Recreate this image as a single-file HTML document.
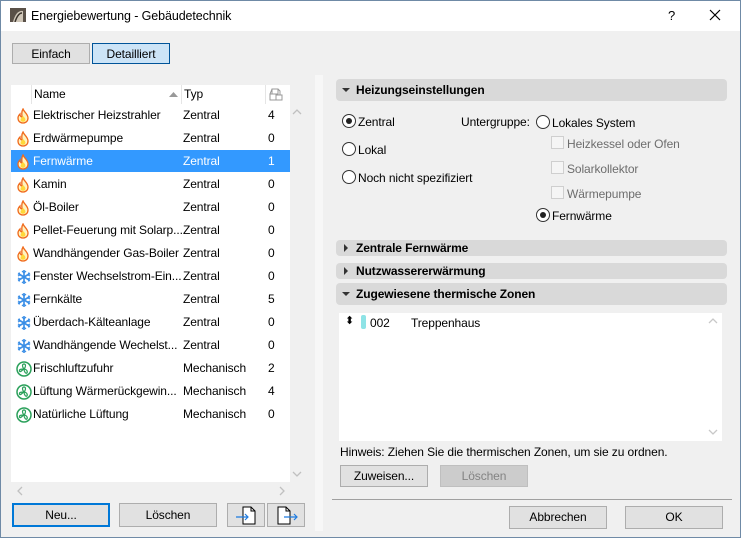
<!DOCTYPE html>
<html><head><meta charset="utf-8"><style>
*{box-sizing:border-box;margin:0;padding:0}
body{width:741px;height:538px;overflow:hidden;background:#f0f0f0;font-family:"Liberation Sans",sans-serif;font-size:12px;color:#000;position:relative;letter-spacing:-0.1px}
.a{position:absolute}
.win{left:0;top:0;width:741px;height:538px;border:1px solid #6f8aa6}
.title{left:1px;top:1px;width:739px;height:30px;background:#fff}
.btn{position:absolute;background:#e1e1e1;border:1px solid #adadad;text-align:center;line-height:20px;font-size:12px}
.row{position:absolute;left:11px;width:279px;height:23px;line-height:23px}
.row span{position:absolute;white-space:nowrap}
.row svg{position:absolute;left:5px;top:4px}
.hdr{position:absolute;left:336px;width:391px;background:#d9d9d9;border-radius:4px;font-weight:bold;font-size:12px;padding-left:20px}
.tri{position:absolute;left:6px;width:0;height:0}
.radio{position:absolute;width:14px;height:14px;border:1px solid #333;border-radius:50%;background:#fff}
.radio.on::after{content:"";position:absolute;left:3px;top:3px;width:6px;height:6px;border-radius:50%;background:#222}
.cb{position:absolute;width:13px;height:13px;border:1px solid #cfcfcf;background:#f5f5f5}
.lbl{position:absolute;white-space:nowrap}
.gray{color:#6d6d6d}
</style></head><body>
<div class="a win"></div>
<div class="a title"></div>
<svg class="a" style="left:10px;top:8px" width="16" height="14"><rect width="16" height="14" fill="#5a5148"/><path d="M3 14 Q6 2 13 3 L13 14" fill="#cfc6b8"/><path d="M5 14 Q8 5 12 5" stroke="#3a332c" fill="none" stroke-width="1.5"/></svg>
<div class="lbl" style="left:31px;top:9px;font-size:12.5px">Energiebewertung - Gebäudetechnik</div>
<div class="lbl" style="left:668px;top:8px;font-size:13px">?</div>
<svg class="a" style="left:709px;top:9px" width="12" height="12"><path d="M1 1L11 11M11 1L1 11" stroke="#000" stroke-width="1.2"/></svg>

<div class="btn" style="left:12px;top:43px;width:78px;height:21px">Einfach</div>
<div class="btn" style="left:92px;top:43px;width:78px;height:21px;background:#cce4f7;border-color:#005499">Detailliert</div>

<div class="a" style="left:315px;top:75px;width:8px;height:456px;background:#f7f7f7"></div>

<!-- list -->
<div class="a" style="left:11px;top:85px;width:279px;height:397px;background:#fff"></div>
<div class="a" style="left:31px;top:85px;width:150px;height:19px;border-left:1px solid #e5e5e5;line-height:19px;padding-left:2px">Name</div>
<svg class="a" style="left:169px;top:92px" width="9" height="6"><path d="M0 5L4.5 0L9 5Z" fill="#999"/></svg>
<div class="a" style="left:181px;top:85px;width:84px;height:19px;border-left:1px solid #e5e5e5;line-height:19px;padding-left:2px">Typ</div>
<div class="a" style="left:265px;top:85px;width:20px;height:19px;border-left:1px solid #e5e5e5"></div>
<svg class="a" style="left:268px;top:86px" width="16" height="16"><path d="M2 8h6v6H2zM8 9h6v5H8zM4 3h6v5H4zM2 8l2-5M10 3l2 2v4" fill="none" stroke="#999"/></svg>
<div class="a" style="left:11px;top:150px;width:279px;height:22px;background:#3399ff"></div>

<svg width="0" height="0" style="position:absolute"><defs>
<g id="fl"><path d="M7 1C8 4 12 6 12 10C12 13 10 15 7 15C4 15 2 13 2 10C2 8 3 7 4 6C4 8 5 9 6 9C6 6 5 4 7 1Z" fill="#fff3c0" stroke="#f06a1c" stroke-width="1.3"/><path d="M7 8C9 10 10 11 9 13C8 14 6 14 5 13C4 12 5 10 7 8Z" fill="#ffd83a"/></g>
<g id="sn" stroke="#3a8ee6" stroke-width="1.6" fill="none"><path d="M8 1V15M2 4.5L14 11.5M14 4.5L2 11.5"/><path d="M6 2L8 4L10 2M6 14L8 12L10 14M2 7L4 6L3 3.5M14 9L12 10L13 12.5M14 7L12 6L13 3.5M2 9L4 10L3 12.5" stroke-width="1.2"/></g>
<g id="fn"><circle cx="8" cy="8" r="7" fill="#fff" stroke="#2aa05a" stroke-width="1.5"/><path d="M8 8C6 6 6 3 8 3C10 3 10 6 8 8ZM8 8C10 8 12 10 11 12C10 13 8 11 8 8ZM8 8C6 9 4 12 3.5 10C3 8 6 8 8 8Z" fill="none" stroke="#2aa05a" stroke-width="1.2"/></g>
</defs></svg>

<div class="row" style="top:104px"><svg width="16" height="16"><use href="#fl"/></svg><span style="left:22px">Elektrischer Heizstrahler</span><span style="left:172px">Zentral</span><span style="left:257px">4</span></div>
<div class="row" style="top:127px"><svg width="16" height="16"><use href="#fl"/></svg><span style="left:22px">Erdwärmepumpe</span><span style="left:172px">Zentral</span><span style="left:257px">0</span></div>
<div class="row" style="top:150px;color:#fff"><svg width="16" height="16"><use href="#fl"/></svg><span style="left:22px">Fernwärme</span><span style="left:172px">Zentral</span><span style="left:257px">1</span></div>
<div class="row" style="top:173px"><svg width="16" height="16"><use href="#fl"/></svg><span style="left:22px">Kamin</span><span style="left:172px">Zentral</span><span style="left:257px">0</span></div>
<div class="row" style="top:196px"><svg width="16" height="16"><use href="#fl"/></svg><span style="left:22px">Öl-Boiler</span><span style="left:172px">Zentral</span><span style="left:257px">0</span></div>
<div class="row" style="top:219px"><svg width="16" height="16"><use href="#fl"/></svg><span style="left:22px">Pellet-Feuerung mit Solarp...</span><span style="left:172px">Zentral</span><span style="left:257px">0</span></div>
<div class="row" style="top:242px"><svg width="16" height="16"><use href="#fl"/></svg><span style="left:22px">Wandhängender Gas-Boiler</span><span style="left:172px">Zentral</span><span style="left:257px">0</span></div>
<div class="row" style="top:265px"><svg width="16" height="16"><use href="#sn"/></svg><span style="left:22px">Fenster Wechselstrom-Ein...</span><span style="left:172px">Zentral</span><span style="left:257px">0</span></div>
<div class="row" style="top:288px"><svg width="16" height="16"><use href="#sn"/></svg><span style="left:22px">Fernkälte</span><span style="left:172px">Zentral</span><span style="left:257px">5</span></div>
<div class="row" style="top:311px"><svg width="16" height="16"><use href="#sn"/></svg><span style="left:22px">Überdach-Kälteanlage</span><span style="left:172px">Zentral</span><span style="left:257px">0</span></div>
<div class="row" style="top:334px"><svg width="16" height="16"><use href="#sn"/></svg><span style="left:22px">Wandhängende Wechelst...</span><span style="left:172px">Zentral</span><span style="left:257px">0</span></div>
<div class="row" style="top:357px"><svg width="16" height="16"><use href="#fn"/></svg><span style="left:22px">Frischluftzufuhr</span><span style="left:172px">Mechanisch</span><span style="left:257px">2</span></div>
<div class="row" style="top:380px"><svg width="16" height="16"><use href="#fn"/></svg><span style="left:22px">Lüftung Wärmerückgewin...</span><span style="left:172px">Mechanisch</span><span style="left:257px">4</span></div>
<div class="row" style="top:403px"><svg width="16" height="16"><use href="#fn"/></svg><span style="left:22px">Natürliche Lüftung</span><span style="left:172px">Mechanisch</span><span style="left:257px">0</span></div>

<svg class="a" style="left:292px;top:108px" width="10" height="8"><path d="M1 6L5 2L9 6" stroke="#c0c0c0" fill="none" stroke-width="1.3"/></svg>
<svg class="a" style="left:292px;top:470px" width="10" height="8"><path d="M1 2L5 6L9 2" stroke="#c0c0c0" fill="none" stroke-width="1.3"/></svg>
<svg class="a" style="left:16px;top:486px" width="8" height="10"><path d="M6 1L2 5L6 9" stroke="#c0c0c0" fill="none" stroke-width="1.3"/></svg>
<svg class="a" style="left:278px;top:486px" width="8" height="10"><path d="M2 1L6 5L2 9" stroke="#c0c0c0" fill="none" stroke-width="1.3"/></svg>

<div class="btn" style="left:12px;top:503px;width:98px;height:24px;border:2px solid #0078d7;line-height:20px">Neu...</div>
<div class="btn" style="left:119px;top:503px;width:98px;height:24px;line-height:22px">Löschen</div>
<div class="btn" style="left:227px;top:503px;width:38px;height:24px"></div>
<div class="btn" style="left:267px;top:503px;width:38px;height:24px"></div>
<svg class="a" style="left:235px;top:506px" width="24" height="19"><path d="M8 1H16L20 5V18H8Z" fill="#fff" stroke="#000"/><path d="M16 1V5H20" fill="none" stroke="#000"/><path d="M1 11H13M10 8L13 11L10 14" stroke="#1e7be0" fill="none" stroke-width="1.2"/></svg>
<svg class="a" style="left:275px;top:506px" width="24" height="19"><path d="M3 1H11L15 5V18H3Z" fill="#fff" stroke="#000"/><path d="M11 1V5H15" fill="none" stroke="#000"/><path d="M9 11H22M19 8L22 11L19 14" stroke="#1e7be0" fill="none" stroke-width="1.2"/></svg>

<!-- right -->
<div class="hdr" style="top:79px;height:22px;line-height:22px"><div class="tri" style="top:9px;border-left:4px solid transparent;border-right:4px solid transparent;border-top:4px solid #333"></div>Heizungseinstellungen</div>
<div class="radio on" style="left:342px;top:114px"></div><div class="lbl" style="left:358px;top:115px">Zentral</div>
<div class="radio" style="left:342px;top:142px"></div><div class="lbl" style="left:358px;top:143px">Lokal</div>
<div class="radio" style="left:342px;top:170px"></div><div class="lbl" style="left:358px;top:171px">Noch nicht spezifiziert</div>
<div class="lbl" style="left:461px;top:115px">Untergruppe:</div>
<div class="radio" style="left:536px;top:115px"></div><div class="lbl" style="left:552px;top:116px">Lokales System</div>
<div class="cb" style="left:551px;top:136px"></div><div class="lbl gray" style="left:567px;top:137px">Heizkessel oder Ofen</div>
<div class="cb" style="left:551px;top:161px"></div><div class="lbl gray" style="left:567px;top:162px">Solarkollektor</div>
<div class="cb" style="left:551px;top:186px"></div><div class="lbl gray" style="left:567px;top:187px">Wärmepumpe</div>
<div class="radio on" style="left:536px;top:208px"></div><div class="lbl" style="left:552px;top:209px">Fernwärme</div>

<div class="hdr" style="top:240px;height:16px;line-height:16px"><div class="tri" style="top:4px;border-top:4px solid transparent;border-bottom:4px solid transparent;border-left:4px solid #333;left:8px"></div>Zentrale Fernwärme</div>
<div class="hdr" style="top:263px;height:16px;line-height:16px"><div class="tri" style="top:4px;border-top:4px solid transparent;border-bottom:4px solid transparent;border-left:4px solid #333;left:8px"></div>Nutzwassererwärmung</div>
<div class="hdr" style="top:283px;height:22px;line-height:22px"><div class="tri" style="top:9px;border-left:4px solid transparent;border-right:4px solid transparent;border-top:4px solid #333"></div>Zugewiesene thermische Zonen</div>

<div class="a" style="left:339px;top:313px;width:383px;height:128px;background:#fff"></div>
<div class="lbl" style="left:345px;top:314px;font-size:11px">⬍</div>
<div class="a" style="left:361px;top:315px;width:5px;height:14px;background:#8ee3e6;border-radius:2px"></div>
<div class="lbl" style="left:370px;top:316px">002</div>
<div class="lbl" style="left:411px;top:316px">Treppenhaus</div>
<svg class="a" style="left:708px;top:317px" width="10" height="8"><path d="M1 6L5 2L9 6" stroke="#c8c8c8" fill="none" stroke-width="1.3"/></svg>
<svg class="a" style="left:708px;top:428px" width="10" height="8"><path d="M1 2L5 6L9 2" stroke="#c8c8c8" fill="none" stroke-width="1.3"/></svg>
<div class="lbl" style="left:340px;top:445px">Hinweis: Ziehen Sie die thermischen Zonen, um sie zu ordnen.</div>
<div class="btn" style="left:340px;top:465px;width:88px;height:22px">Zuweisen...</div>
<div class="btn" style="left:440px;top:465px;width:88px;height:22px;background:#cccccc;border-color:#bfbfbf;color:#838383">Löschen</div>
<div class="a" style="left:332px;top:499px;width:400px;height:1px;background:#a0a0a0"></div>
<div class="btn" style="left:509px;top:506px;width:98px;height:23px">Abbrechen</div>
<div class="btn" style="left:625px;top:506px;width:98px;height:23px">OK</div>
</body></html>
